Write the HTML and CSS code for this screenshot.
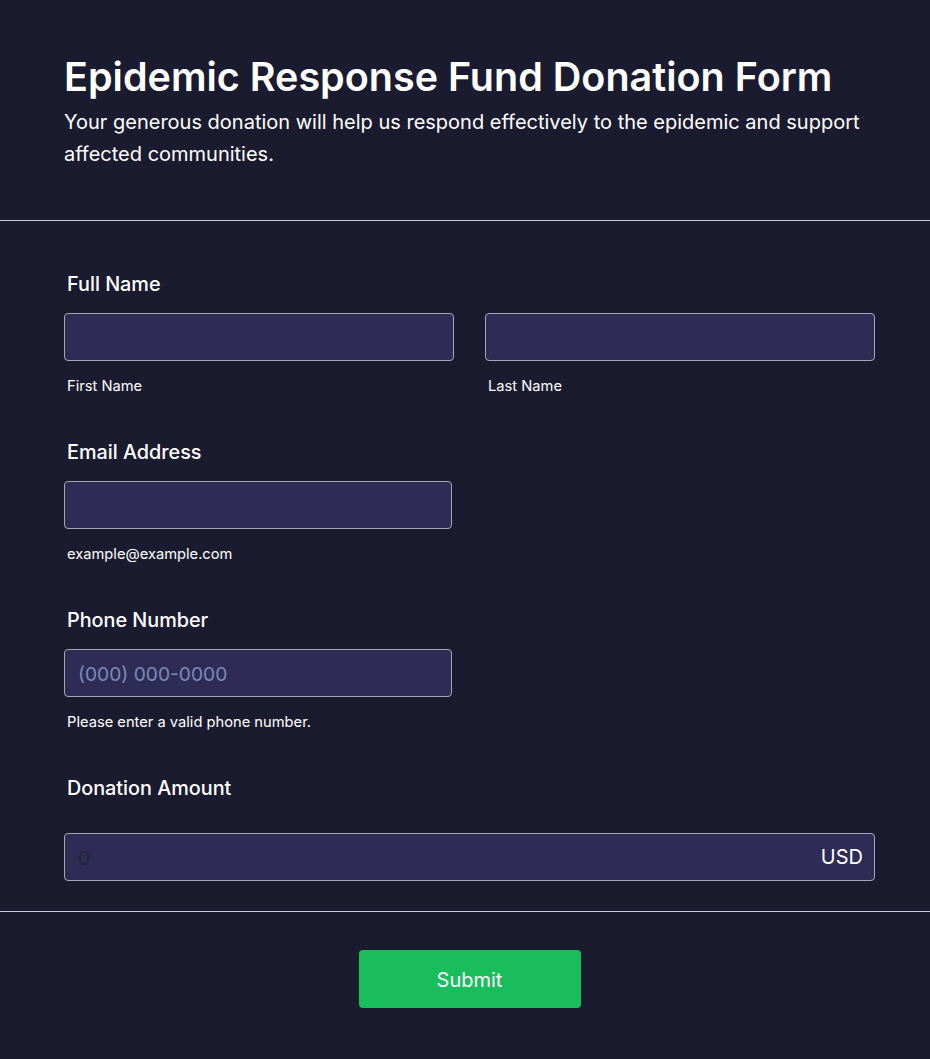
FILE: index.html
```html
<!DOCTYPE html>
<html lang="en">
<head>
<meta charset="utf-8">
<title>Epidemic Response Fund Donation Form</title>
<link rel="stylesheet" href="styles.css">
</head>
<body>
<form class="form">
  <header class="header">
    <h1 class="title">Epidemic Response Fund Donation Form</h1>
    <p class="subtitle">Your generous donation will help us respond effectively to the epidemic and support affected communities.</p>
  </header>
  <div class="fields">
    <div class="field">
      <label class="label">Full Name</label>
      <div class="row">
        <div class="col">
          <input class="input" type="text">
          <span class="sub">First Name</span>
        </div>
        <div class="col">
          <input class="input" type="text">
          <span class="sub">Last Name</span>
        </div>
      </div>
    </div>
    <div class="field">
      <label class="label">Email Address</label>
      <div class="col half">
        <input class="input" type="email">
        <span class="sub">example@example.com</span>
      </div>
    </div>
    <div class="field">
      <label class="label">Phone Number</label>
      <div class="col half">
        <input class="input" type="tel" placeholder="(000) 000-0000">
        <span class="sub">Please enter a valid phone number.</span>
      </div>
    </div>
    <div class="field last">
      <label class="label">Donation Amount</label>
      <div class="amount">
        <input class="input amount-input" type="text" placeholder="0">
        <span class="currency">USD</span>
      </div>
    </div>
  </div>
  <div class="footer">
    <button class="submit" type="button">Submit</button>
  </div>
</form>
</body>
</html>
```
FILE: styles.css
```css
* { box-sizing: border-box; }
html, body { margin: 0; padding: 0; }
body {
  background: #1b1b2f;
  font-family: Inter, "Noto Sans", sans-serif;
  color: #ffffff;
  width: 930px;
  height: 1059px;
  overflow: hidden;
}
.form { display: flex; flex-direction: column; }
.header {
  padding: 54px 55px 50px 64px;
  border-bottom: 1px solid #c9c9d3;
}
.title {
  margin: 0;
  font-size: 39.5px;
  line-height: 46px;
  font-weight: 600;
}
.subtitle {
  margin: 6px 0 0 0;
  font-size: 20px;
  line-height: 32px;
  font-weight: 400;
}
.fields {
  padding: 51px 55px 30px 64px;
  border-bottom: 1px solid #c9c9d3;
  display: flex;
  flex-direction: column;
  gap: 45px;
}
.field { display: flex; flex-direction: column; }
.label {
  font-size: 19.8px;
  line-height: 24px;
  font-weight: 500;
  padding-left: 3px;
  margin-bottom: 17px;
}
.field.last .label { margin-bottom: 33px; }
.row { display: flex; gap: 31px; }
.col { display: flex; flex-direction: column; flex: 1; }
.col.half { width: 388px; flex: none; }
.input {
  width: 100%;
  height: 48px;
  background: #2e2c55;
  border: 1px solid #a6a6bb;
  border-radius: 4px;
  color: #fff;
  font-family: inherit;
  font-size: 19.2px;
  padding: 2px 13px 0 13px;
  outline: none;
}
.input::placeholder { color: #7b8bb8; }
.amount-input::placeholder { color: #25253f; }
.sub {
  margin-top: 17px;
  font-size: 14.7px;
  line-height: 17px;
  padding-left: 3px;
}
.amount { position: relative; }
.currency {
  position: absolute;
  right: 12px;
  top: 0;
  line-height: 48px;
  font-size: 20px;
}
.footer {
  display: flex;
  justify-content: center;
  padding: 38px 55px 51px 64px;
}
.submit {
  width: 222px;
  height: 58px;
  padding-top: 2px;
  background: #19bd5c;
  border: none;
  border-radius: 4px;
  color: #fff;
  font-family: inherit;
  font-size: 20px;
  font-weight: 400;
}
```
